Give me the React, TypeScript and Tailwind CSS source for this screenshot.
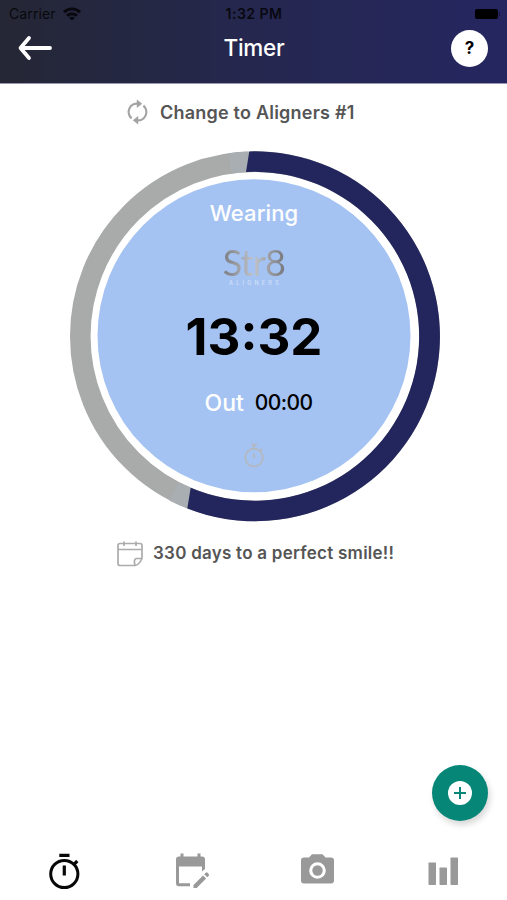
import React from 'react';

const StatusBar: React.FC = () => (
  <div className="grid h-[27px] grid-cols-3 items-center pl-[9px] pr-[7px] text-[14px] text-black/80">
    <div className="flex items-center gap-[7px]">
      <span className="tracking-[0.1px]">Carrier</span>
      <svg width="18" height="14" viewBox="0 0 18 14" fill="none" stroke="#08080f" strokeWidth="2.9">
        <path d="M1 5.2C5.5 0.7 12.5 0.7 17 5.2" />
        <path d="M4 8.8C6.8 6 11.2 6 14 8.8" />
        <path d="M9 13.6L6 10.8C7.7 9.4 10.3 9.4 12 10.8Z" fill="#08080f" stroke="none" />
      </svg>
    </div>
    <span className="justify-self-center pr-[1px] font-semibold tracking-[0.5px]">1:32 PM</span>
    <div className="flex items-center gap-px justify-self-end">
      <div className="h-[10px] w-[23px] rounded-[2px] bg-black" />
      <div className="h-1 w-px bg-black/40" />
    </div>
  </div>
);

const Header: React.FC = () => (
  <header className="h-[84px] border-b border-[#9999b3] bg-linear-to-r from-[#252735] via-[#25274f] to-[#252660]">
    <StatusBar />
    <div className="grid h-[42px] grid-cols-3 items-center pl-[18px] pr-[19px]">
      <svg width="35" height="26" viewBox="0 0 35 26" fill="none" stroke="#fff" strokeWidth="3.8" strokeLinecap="round" strokeLinejoin="round">
        <path d="M32 13H3M11 3L2.5 13L11 23" />
      </svg>
      <h1 className="justify-self-center pl-[2px] text-[22.5px] font-medium tracking-[-0.3px] text-white">Timer</h1>
      <button className="flex h-[37px] w-[37px] items-center justify-center justify-self-end rounded-full bg-white pt-[2px] text-[17px] font-bold text-black">?</button>
    </div>
  </header>
);

// worn time in navy, remaining time in grey
const Ring: React.FC = () => (
  <svg className="absolute inset-0" width="370" height="371" viewBox="0 0 370 371">
    <circle cx="185" cy="185.3" r="174.7" fill="none" stroke="#a9aaaa" strokeWidth="20.6" />
    <path d="M160 12.4A174.7 174.7 0 0 1 178 10.7M120 347.5A174.7 174.7 0 0 1 104 340.3" fill="none" stroke="#a9aeb2" strokeWidth="20.6" />
    <path d="M179.3 0.4A185 185 0 1 1 117.3 357.5L120.7 336.7A164.4 164.4 0 1 0 176 21.1Z" fill="#23265d" />
    <circle cx="184" cy="184.7" r="156.5" fill="#a4c3f3" />
  </svg>
);

const Dial: React.FC = () => (
  <section className="relative ml-[70px] mt-[27px] h-[371px] w-[370px]">
    <Ring />
    <div className="relative flex w-[368px] flex-col items-center pt-[46px]">
      <span className="h-[32px] text-[22px] font-medium leading-[32px] tracking-[0.1px] text-white">Wearing</span>
      <div className="mt-[17px] flex h-[42px] flex-col items-center">
        <span className="bg-linear-to-r from-[#7b7d81] via-[#c2c4ca] to-[#75777b] bg-clip-text font-[Lato,sans-serif] text-[36px] font-normal leading-[32px] tracking-[-0.8px] text-transparent">Str8</span>
        <span className="mt-[2px] pl-[3px] text-[5.5px] font-medium leading-[6px] tracking-[3.2px] text-[#d1e0f8]">ALIGNERS</span>
      </div>
      <span className="mt-[19px] text-[51px] font-bold leading-[60px] text-black">13:32</span>
      <div className="mt-[21px] flex h-[30px] items-center gap-[11px] pl-[9px] font-medium">
        <span className="text-[23px] text-white">Out</span>
        <span className="text-[21px] tracking-[-0.6px] text-black">00:00</span>
      </div>
      <svg className="mt-[25px]" width="22" height="26" viewBox="0 0 22 26" fill="none" stroke="#b3b8c1" strokeWidth="1.9">
        <circle cx="11" cy="14.6" r="8.8" />
        <path d="M8 1.6H14M11 2V5.5M11 10.5V15M17 8L19 6" />
      </svg>
    </div>
  </section>
);

const TabBar: React.FC = () => (
  <nav className="grid h-[58px] grid-cols-4 items-center">
    <svg className="-mt-[1px] ml-[48px]" width="32" height="38" viewBox="0 0 32 38" fill="none" stroke="#080808">
      <circle cx="16.3" cy="22" r="13.6" strokeWidth="3" />
      <path d="M11.3 3.4H21.5M16.3 13.5V23.5" strokeWidth="3.2" />
      <path d="M25.5 12.8L29.3 9" strokeWidth="3.2" />
    </svg>
    <svg className="-mt-[1px] ml-[48px]" width="35" height="38" viewBox="0 0 35 38" fill="#999">
      <path d="M1 7.5Q1 4.5 4 4.5H5.5V1.5H8.5V4.5H22.5V1.5H25.5V4.5H27Q30 4.5 30 7.5V17L27 19.5V14.5H4V31.2H15V34.3H4Q1 34.3 1 31.3Z" />
      <path d="M18.5 33L28 23.5L31.1 26.6L21.7 36H18.5ZM29.2 22.3L30.8 20.7Q31.7 20 32.6 20.8L33.7 21.9Q34.5 22.8 33.8 23.7L32.2 25.3Z" />
    </svg>
    <svg className="-mt-[5px] ml-[47px]" width="33" height="30" viewBox="0 0 33 30" fill="#999" fillRule="evenodd">
      <path d="M11 0.3H21.5L24.5 3.5H30Q33 3.5 33 6.5V26.5Q33 29.5 30 29.5H3Q0 29.5 0 26.5V6.5Q0 3.5 3 3.5H8ZM16.5 8.2A8.3 8.3 0 1 0 16.5 24.8A8.3 8.3 0 1 0 16.5 8.2Z" />
      <circle cx="16.5" cy="16.5" r="5.2" />
    </svg>
    <svg className="-mt-[1px] ml-[48px]" width="31" height="28" viewBox="0 0 31 28" fill="#999">
      <rect x="0.5" y="5.5" width="7.5" height="22.5" rx="0.7" />
      <rect x="11.5" y="10.5" width="7.5" height="17.5" rx="0.7" />
      <rect x="22.5" y="0.5" width="7.5" height="27.5" rx="0.7" />
    </svg>
  </nav>
);

export default function App() {
  return (
    <div className="flex h-[900px] w-[507px] flex-col bg-white font-[Inter,sans-serif]">
      <Header />

      <div className="mt-[14px] flex h-[26px] items-center gap-[12px] pl-[127px]">
        <svg className="mt-[2px]" width="21" height="26" viewBox="0 0 21 26" fill="none" stroke="#a3a3a3" strokeWidth="2.2">
          <path d="M4.6 19.3A8.3 8.3 0 0 1 11.5 4.8M16.4 6.7A8.3 8.3 0 0 1 9.5 21.2" />
          <path d="M9.8 0.5L15.2 4.8L9.8 9ZM11.2 17L5.8 21.2L11.2 25.5Z" fill="#a3a3a3" stroke="none" />
        </svg>
        <span className="pt-[2px] text-[18px] font-semibold tracking-[0.22px] text-[#555]">Change to Aligners #1</span>
      </div>

      <Dial />

      <div className="mt-[18px] flex h-[27px] items-center gap-[10px] pl-[117px]">
        <svg width="26" height="26" viewBox="0 0 26 26" fill="none" stroke="#acacac" strokeWidth="1.7">
          <path d="M18 24.5H3Q1 24.5 1 22.5V4.5Q1 2.5 3 2.5H23Q25 2.5 25 4.5V17.5Q22 24 18 24.5Q17.2 22 17.5 19.5Q17.7 17.7 19.5 17.5H25M1 8.5H25M7 0.5V5M19 0.5V5" />
        </svg>
        <span className="pt-[1px] text-[17px] font-semibold tracking-[0.25px] text-[#555]">330 days to a perfect smile!!</span>
      </div>

      <div className="mt-auto flex justify-end pb-[21px] pr-[19px]">
        <button className="flex h-[56px] w-[56px] items-center justify-center rounded-full bg-[#058677] shadow-[2px_4px_6px_rgba(0,0,0,0.16)]">
          <svg width="24" height="24" viewBox="0 0 24 24">
            <circle cx="12" cy="12" r="12" fill="#fff" />
            <path d="M12 6V18M6 12H18" stroke="#058677" strokeWidth="2" />
          </svg>
        </button>
      </div>
      <TabBar />
    </div>
  );
}
